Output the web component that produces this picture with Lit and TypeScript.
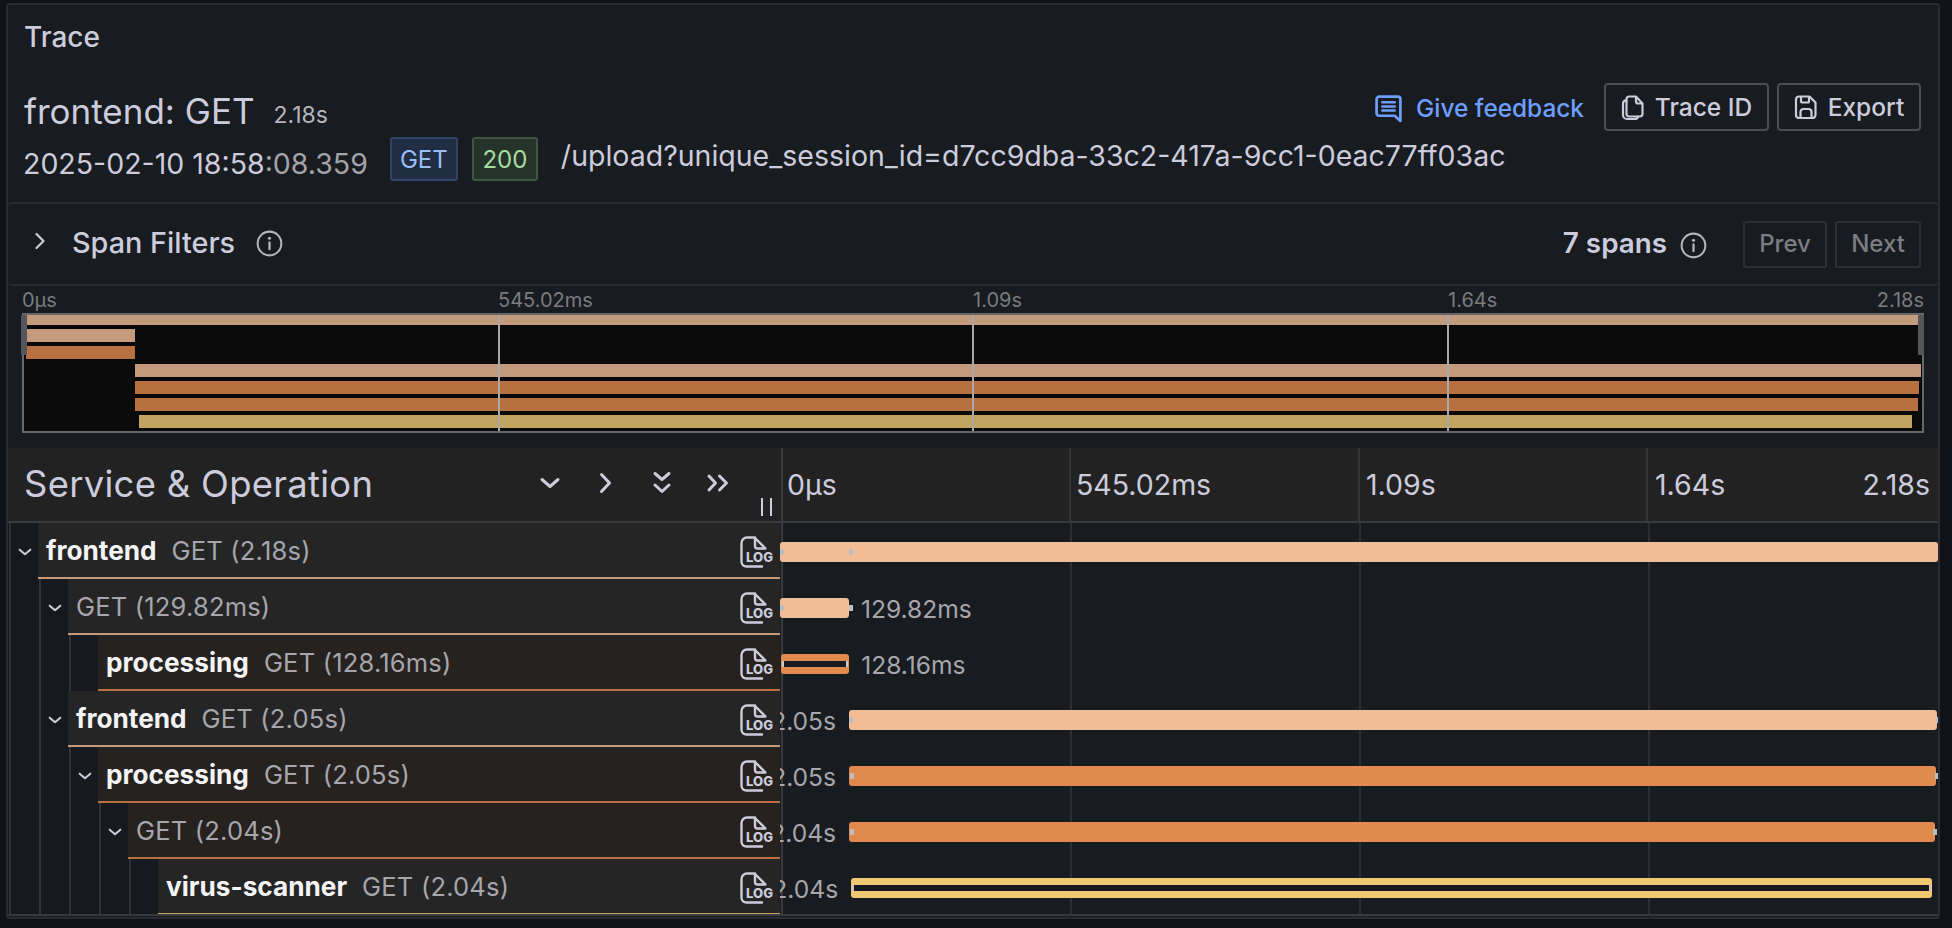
import { LitElement, html, css, svg } from "lit";
import { customElement } from "lit/decorators.js";

const TOTAL = 2180;
const PALE = "#f2bc96";
const ORANGE = "#e08a4e";
const YELLOW = "#eec873";

interface Span {
  service?: string;
  label: string;
  depth: number;
  open: boolean;
  start: number;
  dur: number;
  color: string;
  line: string;
  tint: boolean;
  time: string;
  timeSide?: "left" | "right";
  stripe?: boolean;
  marks: number[];
}

const spans: Span[] = [
  { service: "frontend", label: "GET (2.18s)", depth: 0, open: true, start: 0, dur: 2180, color: PALE, line: "#c49a7b", tint: false, time: "", marks: [0, 130] },
  { label: "GET (129.82ms)", depth: 1, open: true, start: 0, dur: 129.82, color: PALE, line: "#c49a7b", tint: false, time: "129.82ms", timeSide: "right", marks: [0, 130] },
  { service: "processing", label: "GET (128.16ms)", depth: 2, open: false, start: 2, dur: 128.16, color: ORANGE, line: "#b97141", tint: true, time: "128.16ms", timeSide: "right", stripe: true, marks: [] },
  { service: "frontend", label: "GET (2.05s)", depth: 1, open: true, start: 130, dur: 2048, color: PALE, line: "#c49a7b", tint: false, time: "2.05s", timeSide: "left", marks: [130, 2177] },
  { service: "processing", label: "GET (2.05s)", depth: 2, open: true, start: 130, dur: 2046, color: ORANGE, line: "#b97141", tint: true, time: "2.05s", timeSide: "left", marks: [132, 2175] },
  { label: "GET (2.04s)", depth: 3, open: true, start: 130, dur: 2044, color: ORANGE, line: "#b97141", tint: true, time: "2.04s", timeSide: "left", marks: [132, 2171] },
  { service: "virus-scanner", label: "GET (2.04s)", depth: 4, open: false, start: 134, dur: 2034, color: YELLOW, line: "#c4a55f", tint: false, time: "2.04s", timeSide: "left", stripe: true, marks: [] },
];

const pct = (ms: number) => `${(ms / TOTAL) * 100}%`;

const chevronDown = svg`<path d="M4 8.5l8 7 8-7" fill="none" stroke="currentColor" stroke-width="3" stroke-linecap="round" stroke-linejoin="round"/>`;
const infoIcon = html`<svg class="info" viewBox="0 0 26 26"><circle cx="13" cy="13" r="11.4" fill="none" stroke="currentColor" stroke-width="2"/><path d="M13 12v6.5" stroke="currentColor" stroke-width="2.2" stroke-linecap="round"/><circle cx="13" cy="8" r="1.5" fill="currentColor"/></svg>`;

const logIcon = html`<svg class="log" viewBox="0 0 34 32">
  <path d="M15 1.5H7A5.5 5.5 0 0 0 1.500 7v18.500A5 5 0 0 0 6.500 30.500H22" fill="none" stroke="currentColor" stroke-width="2.400" stroke-linecap="round"/>
  <path d="M15 2l10.500 10.500H17.500a2.500 2.500 0 0 1-2.500-2.500z" fill="none" stroke="currentColor" stroke-width="2.400" stroke-linejoin="round"/>
  <text x="6" y="25.500" font-size="13" font-weight="800" font-family="Inter, sans-serif" fill="currentColor" textLength="27" lengthAdjust="spacingAndGlyphs">LOG</text>
</svg>`;

@customElement("app-root")
export class AppRoot extends LitElement {
  static styles = css`
    :host {
      display: block;
      width: 1952px;
      height: 928px;
      box-sizing: border-box;
      padding: 3px 12px 9px 6px;
      background: #111217;
      font-family: Inter, "Noto Sans", sans-serif;
      color: #ccccdc;
      overflow: hidden;
    }
    * {
      box-sizing: border-box;
    }
    .panel {
      height: 916px;
      border: 2px solid #2a2c31;
      border-radius: 4px;
      background: #181b1f;
      display: flex;
      flex-direction: column;
      overflow: hidden;
    }
    .panel-title {
      height: 64px;
      padding: 16px 16px 0;
      font-size: 28px;
      line-height: 32px;
      font-weight: 500;
    }
    .trace-header {
      height: 133px;
      padding: 14px 17px 0 15px;
      display: flex;
      flex-direction: column;
      gap: 6px;
    }
    .top-row {
      display: flex;
      align-items: center;
      height: 48px;
    }
    .title {
      font-size: 35px;
      line-height: 48px;
      font-weight: 400;
      margin-top: 7px;
      margin-left: 1px;
    }
    .duration {
      font-size: 23px;
      color: #b5b5bd;
      margin-left: 19px;
      margin-top: 16px;
    }
    .actions {
      margin-left: auto;
      display: flex;
      align-items: center;
      gap: 8px;
    }
    .feedback {
      display: flex;
      align-items: center;
      gap: 13px;
      color: #6e9fff;
      font-size: 24.400px;
      font-weight: 450;
      margin-right: 12px;
      margin-top: 2px;
    }
    .feedback svg {
      width: 29px;
      height: 29px;
    }
    .btn {
      height: 48px;
      border: 2px solid #4b4d52;
      border-radius: 4px;
      display: flex;
      align-items: center;
      justify-content: center;
      gap: 10px;
      font-size: 24.500px;
      font-weight: 500;
      color: #ccccdc;
    }
    .btn svg {
      width: 24px;
      height: 28px;
    }
    .btn.trace-id {
      width: 165px;
    }
    .btn.export {
      width: 144px;
    }
    .meta-row {
      display: flex;
      align-items: flex-start;
      height: 44px;
    }
    .date {
      font-size: 28.500px;
      line-height: 34px;
      margin-top: 10px;
      white-space: nowrap;
    }
    .date span {
      color: #a3a3a8;
    }
    .badge {
      height: 44px;
      border-radius: 3px;
      border: 2px solid;
      font-size: 24px;
      font-weight: 400;
      display: flex;
      align-items: center;
      justify-content: center;
    }
    .badge.get {
      width: 68px;
      margin-left: 22px;
      background: #212d42;
      border-color: #2f4468;
      color: #9dbdf7;
    }
    .badge.ok {
      width: 66px;
      margin-left: 14px;
      background: #25342a;
      border-color: #3d5740;
      color: #a8dca0;
    }
    .url {
      margin-left: 23px;
      font-size: 28.500px;
      line-height: 34px;
      margin-top: 2px;
      white-space: nowrap;
    }
    .filters {
      height: 84px;
      border-top: 2px solid #2a2c31;
      border-bottom: 2px solid #2a2c31;
      border-radius: 4px;
      display: flex;
      align-items: center;
      padding: 0 17px 0 25px;
    }
    .filters .caret {
      width: 14px;
      height: 20px;
      margin-top: -7px;
    }
    .filters .name {
      margin-left: 25px;
      font-size: 28.800px;
      font-weight: 500;
      margin-top: -4px;
    }
    .info {
      width: 27px;
      height: 27px;
      color: #b5b5bd;
    }
    .filters .name + .info {
      margin-left: 21px;
      margin-top: -2px;
    }
    .count {
      margin-left: auto;
      font-size: 27.800px;
      font-weight: 600;
      margin-top: -3px;
    }
    .filters .count + .info {
      margin-left: 13px;
      margin-top: 2px;
    }
    .pager {
      height: 47px;
      border: 2px solid #2e3035;
      border-radius: 3px;
      display: flex;
      align-items: center;
      justify-content: center;
      padding-bottom: 2px;
      font-size: 24px;
      font-weight: 500;
      color: #7c7d83;
    }
    .pager.prev {
      width: 84px;
      margin-left: 36px;
    }
    .pager.next {
      width: 86px;
      margin-left: 8px;
    }
    .minimap {
      height: 162px;
      padding: 0 14px 0 14px;
      display: flex;
      flex-direction: column;
    }
    .mini-labels {
      height: 27px;
      position: relative;
      font-size: 20px;
      line-height: 28px;
      color: #7a7b80;
    }
    .mini-labels span {
      position: absolute;
      top: 0;
    }
    .mini-view {
      height: 120px;
      width: 1902px;
      border: 2px solid #66676b;
      background: #0b0b0b;
      position: relative;
    }
    .mini-bars {
      height: 116px;
      overflow: hidden;
      display: flex;
      flex-direction: column;
      gap: 4.200px;
    }
    .mini-bar {
      height: 13px;
      flex: none;
      box-shadow: 0 0 2px rgba(0, 0, 0, 0.8);
    }
    .mini-bar:first-child {
      margin-top: -3px;
    }
    .mini-tick {
      position: absolute;
      top: 0;
      bottom: 0;
      width: 2px;
      margin-left: -1px;
      background: #a8a8a8;
    }
    .handle {
      position: absolute;
      top: 0;
      width: 6px;
      height: 40px;
      background: #55565a;
      border-radius: 1px;
    }
    .trace-view {
      flex: 1;
      display: flex;
      flex-direction: column;
      min-height: 0;
    }
    .view-head {
      height: 75px;
      flex: none;
      background: #222222;
      border-bottom: 2px solid #3a3b3e;
      display: flex;
    }
    .head-left {
      width: 773px;
      flex: none;
      display: flex;
      align-items: center;
      padding-left: 16px;
      position: relative;
    }
    .head-left h2 {
      margin: 0;
      font-size: 36.400px;
      font-weight: 400;
      letter-spacing: 0.300px;
      flex: 1;
      margin-top: -2px;
    }
    .collapse {
      display: flex;
      gap: 32px;
      margin-right: 51px;
      margin-top: -3px;
    }
    .collapse svg {
      width: 24px;
      height: 24px;
    }
    .grip {
      position: absolute;
      right: 9px;
      bottom: 5px;
      width: 11px;
      height: 18px;
      border-left: 2px solid #ccccdc;
      border-right: 2px solid #ccccdc;
    }
    .head-right {
      flex: 1;
      position: relative;
      border-left: 2px solid #3a3b3e;
      font-size: 28.500px;
      display: flex;
      align-items: center;
    }
    .head-right span {
      position: absolute;
    }
    .head-tick {
      position: absolute;
      top: 0;
      bottom: 0;
      width: 2px;
      background: #333437;
    }
    .rows {
      flex: 1;
      position: relative;
      display: flex;
      flex-direction: column;
    }
    .row {
      height: 56px;
      flex: none;
      display: flex;
    }
    .left {
      width: 772px;
      flex: none;
      display: flex;
      padding-left: 1px;
      background: #161a1f;
    }
    .indent {
      width: 30px;
      flex: none;
      border-left: 2px solid #303236;
    }
    .toggle {
      width: 29px;
      flex: none;
      border-left: 2px solid #303236;
      display: flex;
      align-items: center;
      justify-content: center;
      color: #ccccdc;
    }
    .toggle svg {
      width: 16px;
      height: 16px;
      margin-top: 2px;
    }
    .name-cell {
      flex: 1;
      min-width: 0;
      background: #252525;
      border-bottom: 2px solid;
      display: flex;
      align-items: center;
      padding: 0 6px 0 8px;
      font-size: 25.500px;
    }
    .name-cell.tint {
      background: #262220;
    }
    .service {
      font-weight: 700;
      font-size: 26.200px;
      color: #f4f4f6;
      margin-right: 15px;
      margin-top: 1px;
    }
    .op {
      color: #a6a6ab;
      flex: 1;
      letter-spacing: 0.200px;
      white-space: nowrap;
      margin-top: 1px;
    }
    .log {
      width: 34px;
      height: 32px;
      color: #ccccdc;
      flex: none;
      margin-top: 4px;
    }
    .right {
      flex: 1;
      position: relative;
      overflow: hidden;
    }
    .divider {
      position: absolute;
      left: 1px;
      top: 0;
      bottom: 0;
      width: 2px;
      background: #3a3b3e;
    }
    .tick {
      position: absolute;
      top: 0;
      bottom: 0;
      width: 2px;
      background: #2c2e32;
    }
    .bar {
      position: absolute;
      top: 19px;
      height: 20px;
      border-radius: 3px;
    }
    .stripe {
      position: absolute;
      left: 1px;
      right: 1px;
      top: 7px;
      height: 6px;
      background: #181b1f;
      border-left: 2px solid #c9c9c9;
      border-right: 2px solid #c9c9c9;
    }
    .mark {
      position: absolute;
      top: 26px;
      width: 4px;
      height: 6px;
      background: #bdbdbd;
    }
    .time {
      position: absolute;
      top: 0;
      height: 56px;
      display: flex;
      align-items: center;
      padding-top: 3px;
      font-size: 24.600px;
      color: #a6a6ab;
      white-space: nowrap;
    }
    .foot {
      border-top: 2px solid #3a3b3e;
      height: 3px;
      position: absolute;
      left: 0;
      right: 0;
      bottom: 0;
    }
  `;

  private renderMinimap() {
    const labels: [string, string][] = [
      ["0µs", "left: 0"],
      ["545.02ms", "left: 476px"],
      ["1.09s", "left: 951px"],
      ["1.64s", "left: 1426px"],
      ["2.18s", "right: 0"],
    ];
    return html`<div class="minimap">
      <div class="mini-labels">${labels.map(([t, s]) => html`<span style=${s}>${t}</span>`)}</div>
      <div class="mini-view">
        <div class="mini-bars">
          ${spans.map((s) => {
            const c = s.color === PALE ? "#c39a7c" : s.color === ORANGE ? "#b7703f" : "#c0a460";
            // the overview runs a little wider than the detail rows
            const start = s.start * 0.985;
            const end = s.start + s.dur < 200 ? (s.start + s.dur) * 0.98 : s.start + s.dur + 1;
            return html`<div
              class="mini-bar"
              style="margin-left:${pct(start)};width:${pct(end - start)};background:${c}"
            ></div>`;
          })}
        </div>
        ${[25, 50, 75].map((p) => html`<div class="mini-tick" style="left:${p}%"></div>`)}
        <div class="handle" style="left:-3px"></div>
        <div class="handle" style="right:-2px"></div>
      </div>
    </div>`;
  }

  private renderHead() {
    return html`<div class="view-head">
      <div class="head-left">
        <h2>Service &amp; Operation</h2>
        <div class="collapse">
          <svg viewBox="0 0 24 24">${chevronDown}</svg>
          <svg viewBox="0 0 24 24"><path d="M7.500 3.500l8 8.500-8 8.500" fill="none" stroke="currentColor" stroke-width="3" stroke-linecap="round" stroke-linejoin="round"/></svg>
          <svg viewBox="0 0 24 24"><path d="M5 2.500l7 6 7-6M5 14l7 6.500 7-6.500" fill="none" stroke="currentColor" stroke-width="3" stroke-linecap="round" stroke-linejoin="round"/></svg>
          <svg viewBox="0 0 24 24"><path d="M3 5l6.500 7L3 19M13.500 5l7 7-7 7" fill="none" stroke="currentColor" stroke-width="3" stroke-linecap="round" stroke-linejoin="round"/></svg>
        </div>
        <div class="grip"></div>
      </div>
      <div class="head-right">
        <span style="left:4px">0µs</span>
        <span style="left:293px">545.02ms</span>
        <span style="left:583px">1.09s</span>
        <span style="left:872px">1.64s</span>
        <span style="right:8px">2.18s</span>
        ${[288, 577, 865].map((x) => html`<div class="head-tick" style="left:${x - 2}px"></div>`)}
      </div>
    </div>`;
  }

  private renderRow(s: Span) {
    const width = 1158;
    const toPx = (ms: number) => (ms / TOTAL) * width;
    const left = toPx(s.start);
    const barW = toPx(s.dur);
    return html`<div class="row">
      <div class="left">
        ${Array.from({ length: s.depth }, () => html`<div class="indent"></div>`)}
        <div class="toggle">
          ${s.open ? html`<svg viewBox="0 0 24 24">${chevronDown}</svg>` : null}
        </div>
        <div class="name-cell ${s.tint ? "tint" : ""}" style="border-bottom-color:${s.line}">
          ${s.service ? html`<span class="service">${s.service}</span>` : null}
          <span class="op">${s.label}</span>
          ${logIcon}
        </div>
      </div>
      <div class="right">
        ${[290, 579, 868].map((x) => html`<div class="tick" style="left:${x}px"></div>`)}
        <div class="divider"></div>
        <div class="bar" style="left:${left}px;width:${barW}px;background:${s.color}">
          ${s.stripe ? html`<div class="stripe"></div>` : null}
        </div>
        ${s.marks.map((m) => html`<div class="mark" style="left:${toPx(m)}px"></div>`)}
        ${s.timeSide === "right"
          ? html`<div class="time" style="left:${left + barW + 12}px">${s.time}</div>`
          : null}
        ${s.timeSide === "left"
          ? html`<div class="time" style="right:${width - left + 13}px">${s.time}</div>`
          : null}
      </div>
    </div>`;
  }

  render() {
    return html`<div class="panel">
      <div class="panel-title">Trace</div>
      <div class="trace-header">
        <div class="top-row">
          <div class="title">frontend: GET</div>
          <div class="duration">2.18s</div>
          <div class="actions">
            <div class="feedback">
              <svg viewBox="0 0 28 28">
                <path d="M5 2.500h18a2.500 2.500 0 0 1 2.500 2.500v21l-5.500-5H5A2.500 2.500 0 0 1 2.500 18.500V5A2.500 2.500 0 0 1 5 2.500z" fill="none" stroke="currentColor" stroke-width="2.600" stroke-linejoin="round"/>
                <path d="M8 8h12M8 12h12M8 16h12" stroke="currentColor" stroke-width="2.400" stroke-linecap="round"/>
              </svg>
              Give feedback
            </div>
            <div class="btn trace-id">
              <svg viewBox="0 0 24 28">
                <path d="M8 3.500h7l6.500 7V21a2.500 2.500 0 0 1-2.500 2.500H8A2.500 2.500 0 0 1 5.500 21V6A2.500 2.500 0 0 1 8 3.500z" fill="none" stroke="currentColor" stroke-width="2.200" stroke-linejoin="round"/>
                <path d="M15 3.500v5a2 2 0 0 0 2 2h4.500" fill="none" stroke="currentColor" stroke-width="2.200"/>
                <path d="M5.500 7.500A3 3 0 0 0 2 10.500V22a4 4 0 0 0 4 4h8a3 3 0 0 0 3-2.500" fill="none" stroke="currentColor" stroke-width="2.200" stroke-linecap="round"/>
              </svg>
              Trace ID
            </div>
            <div class="btn export">
              <svg viewBox="0 0 24 28">
                <path d="M5 3.500h10.500l6 6V22a3 3 0 0 1-3 3H5a3 3 0 0 1-3-3V6.500a3 3 0 0 1 3-3z" fill="none" stroke="currentColor" stroke-width="2.200" stroke-linejoin="round"/>
                <path d="M7 3.500V8a1.500 1.500 0 0 0 1.500 1.500h5A1.500 1.500 0 0 0 15 8V3.500M6.500 25v-6a3 3 0 0 1 3-3h5a3 3 0 0 1 3 3v6" fill="none" stroke="currentColor" stroke-width="2.200"/>
              </svg>
              Export
            </div>
          </div>
        </div>
        <div class="meta-row">
          <div class="date">2025-02-10 18:58<span>:08.359</span></div>
          <div class="badge get">GET</div>
          <div class="badge ok">200</div>
          <div class="url">/upload?unique_session_id=d7cc9dba-33c2-417a-9cc1-0eac77ff03ac</div>
        </div>
      </div>
      <div class="filters">
        <svg class="caret" viewBox="0 0 14 20"><path d="M3.500 3l7 7-7 7" fill="none" stroke="currentColor" stroke-width="2.200" stroke-linecap="round" stroke-linejoin="round"/></svg>
        <div class="name">Span Filters</div>
        ${infoIcon}
        <div class="count">7 spans</div>
        ${infoIcon}
        <div class="pager prev">Prev</div>
        <div class="pager next">Next</div>
      </div>
      ${this.renderMinimap()}
      <div class="trace-view">
        ${this.renderHead()}
        <div class="rows">
          ${spans.map((s) => this.renderRow(s))}
          <div class="foot"></div>
        </div>
      </div>
    </div>`;
  }
}
